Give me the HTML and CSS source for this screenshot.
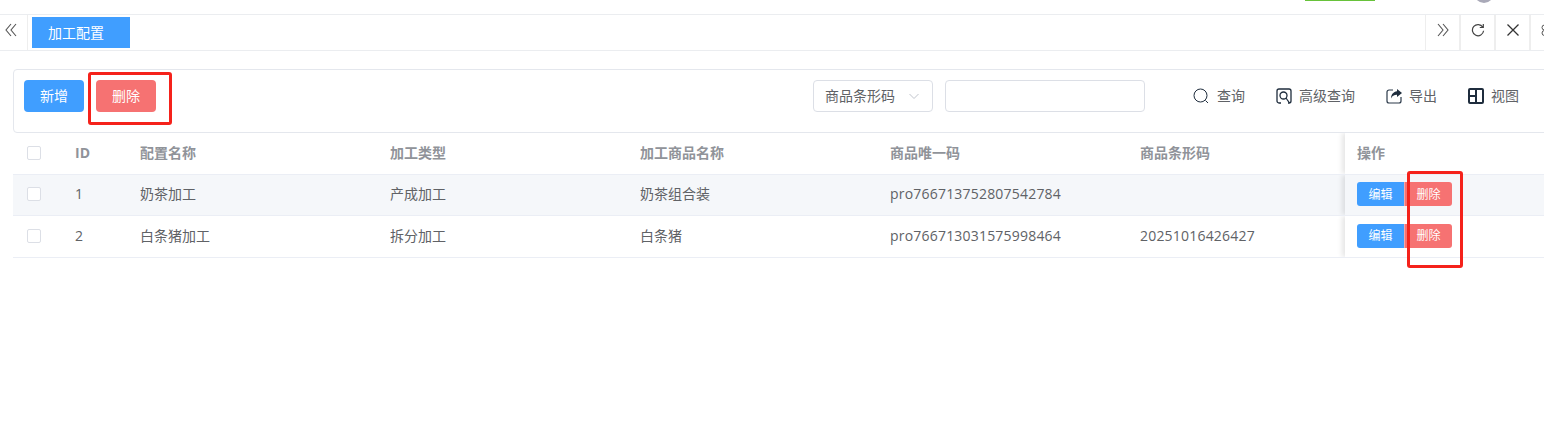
FILE: index.html
```html
<!DOCTYPE html>
<html lang="zh-CN">
<head>
    <meta charset="UTF-8">
    <meta name="viewport" content="width=device-width, initial-scale=1.0">
    <title>加工配置</title>
    <link rel="stylesheet" href="styles.css">
</head>

<body>

    <div class="topo">
        <span class="topo-verde"></span>
        <span class="topo-avatar"></span>
    </div>

    <div class="abas">
        <button class="aba-btn aba-esquerda">
            <svg width="12" height="14" viewBox="0 0 12 14"><path d="M6 1 1 7l5 6M11 1 6 7l5 6" fill="none" stroke="#555" stroke-width="1.1"/></svg>
        </button>
        <div class="aba-ativa">加工配置</div>
        <div class="abas-direita">
            <button class="aba-btn">
                <svg width="12" height="14" viewBox="0 0 12 14"><path d="M1 1l5 6-5 6M6 1l5 6-5 6" fill="none" stroke="#555" stroke-width="1.1"/></svg>
            </button>
            <button class="aba-btn">
                <svg width="14" height="14" viewBox="0 0 14 14"><path d="M11.8 4.2A5.6 5.6 0 1 0 12.6 7.8M12.3 1v3.5H8.8" fill="none" stroke="#444" stroke-width="1.2"/></svg>
            </button>
            <button class="aba-btn">
                <svg width="14" height="14" viewBox="0 0 14 14"><path d="M1.5 1.5l11 11M12.5 1.5l-11 11" fill="none" stroke="#333" stroke-width="1.3"/></svg>
            </button>
            <button class="aba-btn">
                <svg width="14" height="14" viewBox="0 0 14 14"><circle cx="3.5" cy="4.5" r="2.5" fill="none" stroke="#555"/><circle cx="3.5" cy="10" r="2.5" fill="none" stroke="#555"/></svg>
            </button>
        </div>
    </div>

    <div class="conteudo">
        <div class="barra">
            <button class="btn btn-azul">新增</button>
            <button class="btn btn-vermelho">删除</button>

            <div class="filtros">
                <div class="seletor">
                    <span>商品条形码</span>
                    <svg width="10" height="10" viewBox="0 0 10 10"><path d="M.5 3 5 7.5 9.5 3" fill="none" stroke="#c0c4cc" stroke-width="1"/></svg>
                </div>
                <div class="campo"></div>
            </div>

            <div class="acoes">
                <span class="acao">
                    <svg width="17" height="17" viewBox="0 0 17 17"><circle cx="7.5" cy="7.5" r="6.5" fill="none" stroke="#1f2d3d" stroke-width="1"/><path d="M12.5 12.5l2.5 2.5" stroke="#1f2d3d" stroke-width="1"/></svg>
                    查询
                </span>
                <span class="acao">
                    <svg width="16" height="16" viewBox="0 0 16 16"><path d="M5 15H3a2 2 0 0 1-2-2V3a2 2 0 0 1 2-2h10a2 2 0 0 1 2 2v10a2 2 0 0 1-2 2h-1" fill="none" stroke="#1f2d3d" stroke-width="1.3"/><circle cx="7.5" cy="7.5" r="3.5" fill="none" stroke="#1f2d3d" stroke-width="1.3"/><path d="M10 10l3.5 5" stroke="#1f2d3d" stroke-width="1.3"/></svg>
                    高级查询
                </span>
                <span class="acao">
                    <svg width="16" height="16" viewBox="0 0 16 16"><path d="M7 2H3a2 2 0 0 0-2 2v9a2 2 0 0 0 2 2h10a2 2 0 0 0 2-2V9" fill="none" stroke="#2c3a4a" stroke-width="1.2"/><path d="M11 1l5 4-5 4V6.800C8 6.800 6 8 5 10.500 5 6.500 7.500 3.700 11 3.300z" fill="#1f2d3d"/></svg>
                    导出
                </span>
                <span class="acao">
                    <svg width="16" height="16" viewBox="0 0 16 16"><rect x="1" y="1" width="14" height="14" rx="1" fill="none" stroke="#1f2d3d" stroke-width="2"/><path d="M8 1v14M1 8h7" stroke="#1f2d3d" stroke-width="2"/></svg>
                    视图
                </span>
            </div>

            <span class="destaque destaque-barra"></span>
        </div>

        <div class="tabela">
            <div class="linha cabecalho">
                <div class="celula-check"><span class="check"></span></div>
                <div class="celula">ID</div>
                <div class="celula">配置名称</div>
                <div class="celula">加工类型</div>
                <div class="celula">加工商品名称</div>
                <div class="celula">商品唯一码</div>
                <div class="celula">商品条形码</div>
                <div class="celula celula-fixa">操作</div>
            </div>
            <div class="linha linha-cinza">
                <div class="celula-check"><span class="check"></span></div>
                <div class="celula">1</div>
                <div class="celula">奶茶加工</div>
                <div class="celula">产成加工</div>
                <div class="celula">奶茶组合装</div>
                <div class="celula numero">pro766713752807542784</div>
                <div class="celula"></div>
                <div class="celula celula-fixa">
                    <button class="mini mini-azul">编辑</button><button class="mini mini-vermelho">删除</button>
                </div>
            </div>
            <div class="linha">
                <div class="celula-check"><span class="check"></span></div>
                <div class="celula">2</div>
                <div class="celula">白条猪加工</div>
                <div class="celula">拆分加工</div>
                <div class="celula">白条猪</div>
                <div class="celula numero">pro766713031575998464</div>
                <div class="celula numero">20251016426427</div>
                <div class="celula celula-fixa">
                    <button class="mini mini-azul">编辑</button><button class="mini mini-vermelho">删除</button>
                </div>
            </div>
            <span class="destaque destaque-tabela"></span>
        </div>
    </div>

</body>
</html>
```

FILE: styles.css
```css
* {
    font-family: "Open Sans", "Noto Sans CJK SC", sans-serif;
    margin: 0;
    padding: 0;
    box-sizing: border-box;
}

html, body {
    height: 100%;
    overflow: hidden;
}

body {
    background-color: #fff;
    color: #606266;
    font-size: 14px;
    line-height: 20px;
}

button {
    border: none;
    cursor: pointer;
}

/* Faixa do topo */
.topo {
    height: 15px;
    border-bottom: 1px solid #ebedf0;
    display: flex;
    overflow: hidden;
    padding-left: 1305px;
}

.topo-verde {
    width: 70px;
    height: 1px;
    background-color: #67c23a;
}

.topo-avatar {
    width: 20px;
    height: 20px;
    margin-left: 99px;
    margin-top: -17px;
    border-radius: 50%;
    background-color: #a9a9b8;
}

/* Abas */
.abas {
    height: 36px;
    border-bottom: 1px solid #ebedf0;
    display: flex;
    align-items: flex-start;
}

.aba-btn {
    width: 35px;
    height: 35px;
    background: #fff;
    border-left: 1px solid #eee;
    border-right: 1px solid #eee;
    display: flex;
    justify-content: center;
    padding-top: 8px;
}

.aba-esquerda {
    width: 28px;
    border-left: none;
    padding-right: 5px;
}

.aba-ativa {
    width: 98px;
    height: 31px;
    margin-left: 4px;
    margin-top: 2px;
    background-color: #409eff;
    color: #fff;
    line-height: 31px;
    padding-left: 16px;
}

.abas-direita {
    margin-left: auto;
    display: flex;
    margin-right: -21px;
}

/* Conteúdo */
.conteudo {
    padding: 18px 0 0 13px;
    width: 1560px;
}

.barra {
    position: relative;
    height: 64px;
    border: 1px solid #e4e7ed;
    border-radius: 4px;
    display: flex;
    align-items: flex-start;
    padding: 10px 0 0 10px;
}

.btn {
    width: 60px;
    height: 32px;
    border-radius: 4px;
    color: #fff;
    font-size: 14px;
    margin-right: 12px;
    padding-bottom: 2px;
}

.btn-azul {
    background-color: #409eff;
}

.btn-vermelho {
    background-color: #f67272;
}

.filtros {
    display: flex;
    gap: 12px;
    margin-left: 645px;
}

.seletor {
    width: 120px;
    height: 32px;
    border: 1px solid #dcdfe6;
    border-radius: 4px;
    display: flex;
    align-items: center;
    justify-content: space-between;
    padding: 0 13px 0 11px;
}

.campo {
    width: 200px;
    height: 32px;
    border: 1px solid #dcdfe6;
    border-radius: 4px;
}

.acoes {
    display: flex;
    align-items: center;
    gap: 31px;
    height: 32px;
    margin-left: 48px;
}

.acao {
    display: flex;
    align-items: center;
    gap: 7px;
}

.destaque {
    position: absolute;
    border: 3px solid #f5221b;
    border-radius: 3px;
}

.destaque-barra {
    left: 74px;
    top: 2px;
    width: 84px;
    height: 53px;
}

/* Tabela */
.tabela {
    position: relative;
}

.linha {
    display: grid;
    grid-template-columns: 50px 65px 250px 250px 250px 250px 217px 1fr;
    height: 42px;
    border-bottom: 1px solid #ebeef5;
    align-items: center;
}

.cabecalho {
    color: #909399;
    font-weight: bold;
}

.linha-cinza {
    height: 41px;
    background-color: #f5f7fa;
}

.celula-check {
    padding: 0 0 2px 14px;
    display: flex;
}

.check {
    width: 14px;
    height: 14px;
    border: 1px solid #dcdfe6;
    border-radius: 2px;
    background-color: #fff;
}

.celula {
    padding: 0 0 2px 12px;
}

.numero {
    letter-spacing: 0.2px;
}

.celula-fixa {
    height: 100%;
    display: flex;
    align-items: center;
    background-color: #fff;
    box-shadow: -3px 0 5px rgba(0, 0, 0, 0.1);
    clip-path: inset(0 0 0 -8px);
}

.linha-cinza .celula-fixa {
    background-color: #f5f7fa;
}

.mini {
    height: 24px;
    font-size: 12px;
    color: #fff;
    padding-bottom: 1px;
}

.mini-azul {
    width: 47px;
    background-color: #409eff;
    border-radius: 3px 0 0 3px;
}

.mini-vermelho {
    width: 48px;
    background-color: #f67272;
    border-radius: 0 3px 3px 0;
    border-left: 1px solid #f9a5a5;
}

.destaque-tabela {
    left: 1394px;
    top: 38px;
    width: 56px;
    height: 97px;
}
```
